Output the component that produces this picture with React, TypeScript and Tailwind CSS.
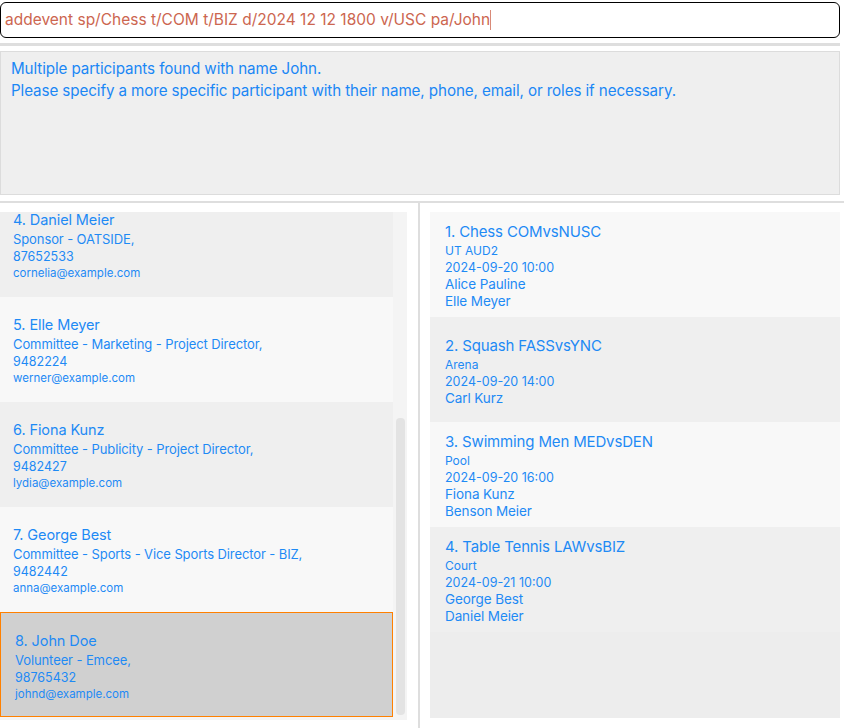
import React from "react";

type Person = {
  idx: number;
  name: string;
  role: string;
  phone: string;
  email: string;
  selected?: boolean;
};

type Event = {
  idx: number;
  title: string;
  venue: string;
  date: string;
  people: string[];
};

const people: Person[] = [
  { idx: 4, name: "Daniel Meier", role: "Sponsor - OATSIDE,", phone: "87652533", email: "cornelia@example.com" },
  { idx: 5, name: "Elle Meyer", role: "Committee - Marketing - Project Director,", phone: "9482224", email: "werner@example.com" },
  { idx: 6, name: "Fiona Kunz", role: "Committee - Publicity - Project Director,", phone: "9482427", email: "lydia@example.com" },
  { idx: 7, name: "George Best", role: "Committee - Sports - Vice Sports Director - BIZ,", phone: "9482442", email: "anna@example.com" },
  { idx: 8, name: "John Doe", role: "Volunteer - Emcee,", phone: "98765432", email: "johnd@example.com", selected: true },
];

const events: Event[] = [
  { idx: 1, title: "Chess COMvsNUSC", venue: "UT AUD2", date: "2024-09-20 10:00", people: ["Alice Pauline", "Elle Meyer"] },
  { idx: 2, title: "Squash FASSvsYNC", venue: "Arena", date: "2024-09-20 14:00", people: ["Carl Kurz"] },
  { idx: 3, title: "Swimming Men MEDvsDEN", venue: "Pool", date: "2024-09-20 16:00", people: ["Fiona Kunz", "Benson Meier"] },
  { idx: 4, title: "Table Tennis LAWvsBIZ", venue: "Court", date: "2024-09-21 10:00", people: ["George Best", "Daniel Meier"] },
];

function PersonCard({ p, i }: { p: Person; i: number }) {
  const bg = p.selected
    ? "bg-[#d0d0d0] border border-[#ff8000] pl-[14px] pt-[4px]"
    : i % 2 === 0
      ? "bg-[#efefef] pl-[13px] pt-[2px]"
      : "bg-[#f8f8f8] pl-[13px] pt-[2px]";
  return (
    <div className={`h-[105px] shrink-0 flex flex-col justify-center text-[#1e8af5] ${bg}`}>
      <div className="text-[14.5px] leading-[20px] tracking-[-0.1px]">
        {p.idx}. {p.name}
      </div>
      <div className="text-[13px] leading-[18px] tracking-[-0.1px]">{p.role}</div>
      <div className="text-[12.5px] leading-[17px]">{p.phone}</div>
      <div className="text-[11.5px] leading-[17px]">{p.email}</div>
    </div>
  );
}

function EventCard({ e, i }: { e: Event; i: number }) {
  return (
    <div className={`h-[105px] shrink-0 flex flex-col justify-center pl-[15px] pt-[3px] text-[#1e8af5] ${i % 2 === 0 ? "bg-[#f8f8f8]" : "bg-[#efefef]"}`}>
      <div className="text-[15px] leading-[20px] tracking-[-0.15px]">
        {e.idx}. {e.title}
      </div>
      <div className="text-[12px] leading-[18px]">{e.venue}</div>
      <div className="text-[12.5px] leading-[16px]">{e.date}</div>
      {e.people.map((n) => (
        <div key={n} className="text-[13.5px] leading-[17px] tracking-[-0.1px]">
          {n}
        </div>
      ))}
    </div>
  );
}

export default function App() {
  return (
    <div className="w-[844px] h-[728px] bg-white overflow-hidden font-['Inter','Noto_Sans',sans-serif]">
      {/* Command box */}
      <div className="pt-[2px]">
        <div className="w-[840px] h-[36px] border border-black rounded-[6px] flex items-center pl-[4px] text-[15.5px] text-[#cc6650]">
          <span>addevent sp/Chess t/COM t/BIZ d/2024 12 12 1800 v/USC pa/John</span>
          <span className="inline-block w-px h-[20px] bg-[#d98a78]" />
        </div>
      </div>
      <div className="mt-[5px] h-[3px] w-[840px] bg-[#dedede]" />

      {/* Result display */}
      <div className="mt-[5px] h-[144px] w-[840px] border border-[#dcdcdc] bg-[#efefef] pl-[10px] pt-[6px] text-[15.2px] leading-[22px] tracking-[-0.1px] text-[#1b87f5]">
        <div>Multiple participants found with name John.</div>
        <div>Please specify a more specific participant with their name, phone, email, or roles if necessary.</div>
      </div>
      <div className="mt-[6px] h-[2px] w-[844px] bg-[#dedede]" />

      {/* Lists */}
      <div className="flex h-[525px]">
        <div className="w-[407px] pt-[9px]">
          <div className="h-[508px] flex bg-[#f4f4f4] overflow-hidden">
            <div className="w-[393px] -mt-[20px] flex flex-col">
              {people.map((p, i) => (
                <PersonCard key={p.idx} p={p} i={i} />
              ))}
            </div>
            <div className="w-[14px] pl-[3px] pr-[2px] pt-[206px]">
              <div className="h-[297px] rounded-[4px] bg-[#e3e3e3]" />
            </div>
          </div>
        </div>
        <div className="w-[11px]" />
        <div className="w-[2px] bg-[#dedede]" />
        <div className="w-[10px]" />
        <div className="w-[410px] pt-[9px]">
          <div className="h-[506px] bg-[#ededed] flex flex-col">
            {events.map((e, i) => (
              <EventCard key={e.idx} e={e} i={i} />
            ))}
          </div>
        </div>
      </div>
    </div>
  );
}
